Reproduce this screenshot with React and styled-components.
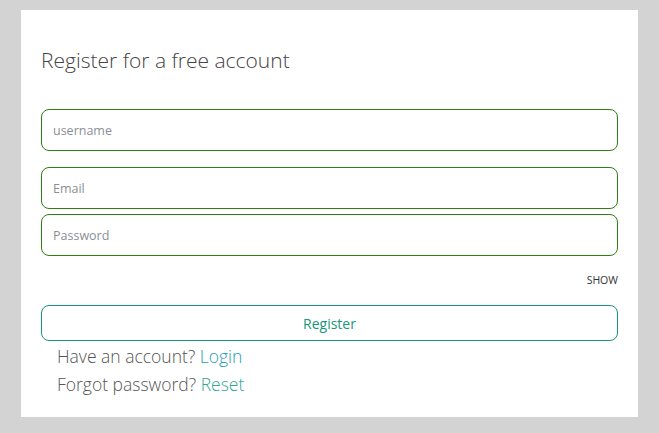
import styled, { createGlobalStyle } from "styled-components";

const GlobalStyle = createGlobalStyle`
  html, body {
    margin: 0;
    padding: 0;
    background: #d3d3d3;
    font-family: "Open Sans", "Segoe UI", sans-serif;
  }
`;

const Page = styled.div`
  width: 659px;
  height: 433px;
  padding: 10px 21px 16px 21px;
  box-sizing: border-box;
`;

const Card = styled.div`
  background: #fff;
  height: 407px;
  box-sizing: border-box;
  padding: 35px 20px 0 20px;
  display: flex;
  flex-direction: column;
`;

const Title = styled.h1`
  margin: 0 0 34px 0;
  font-size: 21px;
  font-weight: 300;
  color: #444;
  line-height: 30px;
`;

const Field = styled.input`
  display: block;
  width: 100%;
  box-sizing: border-box;
  height: 42px;
  border: 1px solid #2f7f12;
  border-radius: 8px;
  padding: 0 11px;
  font-family: "Open Sans", sans-serif;
  font-size: 12.5px;
  color: #333;
  margin-bottom: ${(p) => p.$gap}px;
  outline: none;

  &::placeholder {
    color: #8a8f96;
  }
`;

const ShowRow = styled.div`
  display: flex;
  justify-content: flex-end;
  margin: 16px 0 17px;
`;

const ShowToggle = styled.span`
  font-size: 10.5px;
  color: #333;
  line-height: 16px;
`;

const RegisterButton = styled.button`
  width: 100%;
  height: 36px;
  background: #fff;
  border: 1px solid #17967a;
  border-radius: 8px;
  font-family: "Open Sans", sans-serif;
  font-size: 14px;
  color: #17967a;
  cursor: pointer;
`;

const Links = styled.div`
  padding-left: 16px;
  margin-top: 1px;
`;

const Line = styled.p`
  margin: 0;
  font-size: 17.5px;
  font-weight: 300;
  line-height: 28px;
  color: #555;
`;

const Link = styled.a`
  color: ${(p) => p.$color};
  text-decoration: none;
`;

export default function App() {
  return (
    <>
      <GlobalStyle />
      <Page>
        <Card>
          <Title>Register for a free account</Title>
          <Field placeholder="username" $gap={16} />
          <Field placeholder="Email" $gap={5} />
          <Field placeholder="Password" type="password" $gap={0} />
          <ShowRow>
            <ShowToggle>SHOW</ShowToggle>
          </ShowRow>
          <RegisterButton>Register</RegisterButton>
          <Links>
            <Line>
              Have an account? <Link href="#" $color="#2a9db2">Login</Link>
            </Line>
            <Line>
              Forgot password? <Link href="#" $color="#35a594">Reset</Link>
            </Line>
          </Links>
        </Card>
      </Page>
    </>
  );
}
